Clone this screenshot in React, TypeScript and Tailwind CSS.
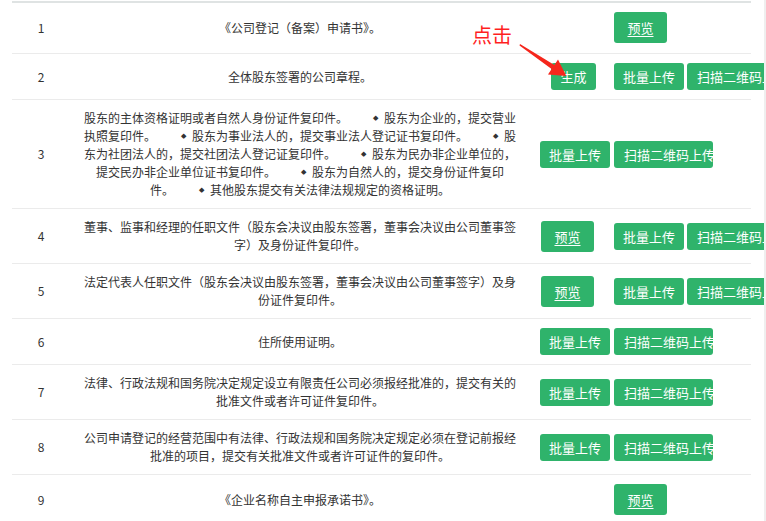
import React from 'react';

type Kind = 'preview' | 'gen' | 'batch' | 'scan';
type Btn = { kind: Kind; ml: string };

const BTN_BASE =
  'inline-flex shrink-0 items-center rounded-[3px] bg-[#2fb36b] text-[13px] leading-none text-white';

const BTN_KIND: Record<Kind, { cls: string; label: string }> = {
  preview: {
    cls: 'h-[31px] w-[53px] justify-center underline underline-offset-[3px]',
    label: '预览',
  },
  gen: { cls: 'h-[27px] w-[45px] justify-center', label: '生成' },
  batch: { cls: 'h-[27px] w-[70px] justify-center', label: '批量上传' },
  scan: {
    cls: 'h-[27px] w-[99px] justify-start overflow-hidden whitespace-nowrap pl-[10px]',
    label: '扫描二维码上传',
  },
};

// ml values are offsets inside the action column (which starts at x=530)
const PREVIEW_ONLY: Btn[] = [{ kind: 'preview', ml: 'ml-[84px]' }];
const UPLOADS: Btn[] = [
  { kind: 'batch', ml: 'ml-[10px]' },
  { kind: 'scan', ml: 'ml-[4px]' },
];
const PREVIEW_UPLOADS: Btn[] = [
  { kind: 'preview', ml: 'ml-[11px]' },
  { kind: 'batch', ml: 'ml-[20px]' },
  { kind: 'scan', ml: 'ml-[3px]' },
];
const GEN_UPLOADS: Btn[] = [
  { kind: 'gen', ml: 'ml-[21px]' },
  { kind: 'batch', ml: 'ml-[18px]' },
  { kind: 'scan', ml: 'ml-[3px]' },
];

function Diamond() {
  return (
    <span className="inline-flex h-[18px] w-[11px] items-center align-top font-['DejaVu_Sans',sans-serif] text-[7px]">
      ◆
    </span>
  );
}

function Gap() {
  return <span className="inline-block w-[25px]" />;
}

// row 3 is a long list with bullet markers; lines are kept as in the page
const ROW3: string[][] = [
  ['股东的主体资格证明或者自然人身份证件复印件。', '股东为企业的，提交营业'],
  ['执照复印件。', '股东为事业法人的，提交事业法人登记证书复印件。', '股'],
  ['东为社团法人的，提交社团法人登记证复印件。', '股东为民办非企业单位的，'],
  ['提交民办非企业单位证书复印件。', '股东为自然人的，提交身份证件复印'],
  ['件。', '其他股东提交有关法律法规规定的资格证明。'],
];

function Row3Text() {
  return (
    <>
      {ROW3.map((parts, i) => (
        <div key={i} className="whitespace-nowrap">
          {parts.map((p, j) => (
            <React.Fragment key={j}>
              {j > 0 && (
                <>
                  <Gap />
                  <Diamond />
                </>
              )}
              {p}
            </React.Fragment>
          ))}
        </div>
      ))}
    </>
  );
}

type Row = { no: number; text: React.ReactNode; buttons: Btn[]; extra?: string };

const ROWS: Row[] = [
  { no: 1, text: '《公司登记（备案）申请书》。', buttons: PREVIEW_ONLY, extra: 'pb-[10px]' },
  { no: 2, text: '全体股东签署的公司章程。', buttons: GEN_UPLOADS },
  { no: 3, text: <Row3Text />, buttons: UPLOADS },
  {
    no: 4,
    text: '董事、监事和经理的任职文件（股东会决议由股东签署，董事会决议由公司董事签字）及身份证件复印件。',
    buttons: PREVIEW_UPLOADS,
  },
  {
    no: 5,
    text: '法定代表人任职文件（股东会决议由股东签署，董事会决议由公司董事签字）及身份证件复印件。',
    buttons: PREVIEW_UPLOADS,
  },
  { no: 6, text: '住所使用证明。', buttons: UPLOADS },
  {
    no: 7,
    text: '法律、行政法规和国务院决定规定设立有限责任公司必须报经批准的，提交有关的批准文件或者许可证件复印件。',
    buttons: UPLOADS,
  },
  {
    no: 8,
    text: '公司申请登记的经营范围中有法律、行政法规和国务院决定规定必须在登记前报经批准的项目，提交有关批准文件或者许可证件的复印件。',
    buttons: UPLOADS,
  },
  { no: 9, text: '《企业名称自主申报承诺书》。', buttons: PREVIEW_ONLY },
];

export default function App() {
  return (
    <div className="relative h-[521px] w-[766px] overflow-hidden bg-white font-['Microsoft_YaHei','Noto_Sans_CJK_SC',sans-serif] text-[#333]">
      <div className="flex h-full">
        <div className="h-full w-[764px] overflow-hidden pl-[12px]">
          <div className="mt-[1px] w-[739px] border-t-2 border-[#dfe3e3]">
            {ROWS.map((r) => (
              <div
                key={r.no}
                className={`flex items-center border-b border-[#ebebeb] pt-[9px] ${r.extra ?? 'pb-[9px]'}`}
              >
                <div className="w-[58px] shrink-0 text-center text-[12px] leading-[18px]">{r.no}</div>
                <div className="w-[460px] shrink-0 px-[12px] text-center text-[12px] leading-[18px]">
                  {r.text}
                </div>
                <div className="flex shrink-0 items-center">
                  {r.buttons.map((b, i) => (
                    <span key={i} className={`${BTN_BASE} ${BTN_KIND[b.kind].cls} ${b.ml}`}>
                      {BTN_KIND[b.kind].label}
                    </span>
                  ))}
                </div>
              </div>
            ))}
          </div>
        </div>
        <div className="h-full w-[2px] bg-[#efefef]" />
      </div>

      {/* annotation over the table */}
      <span className="pointer-events-none absolute left-[472px] top-[25px] text-[20px] leading-[20px] text-[#ff1f1f]">
        点击
      </span>
      <svg
        className="pointer-events-none absolute left-0 top-0"
        width="766"
        height="521"
        viewBox="0 0 766 521"
      >
        <polygon
          points="520,44 554.4,64.9 558,59.5 566.3,76 548,74.5 551.6,69.1 519.5,45.5"
          fill="#f5261c"
        />
      </svg>
    </div>
  );
}
